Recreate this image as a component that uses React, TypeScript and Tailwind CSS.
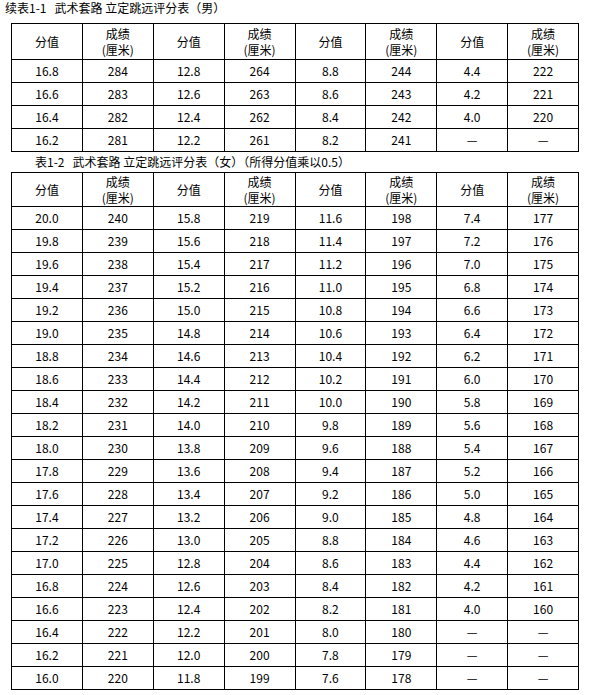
import React from 'react';

type Row = [string, string, string, string, string, string, string, string];

const maleRows: Row[] = [
  ['16.8', '284', '12.8', '264', '8.8', '244', '4.4', '222'],
  ['16.6', '283', '12.6', '263', '8.6', '243', '4.2', '221'],
  ['16.4', '282', '12.4', '262', '8.4', '242', '4.0', '220'],
  ['16.2', '281', '12.2', '261', '8.2', '241', '—', '—'],
];

// 女子表：四组分值/成绩并排，每组按 0.2 分递减
function buildFemaleRows(): Row[] {
  const rows: Row[] = [];
  for (let i = 0; i < 21; i++) {
    const a = (20 - i * 0.2).toFixed(1);
    const b = String(240 - i);
    const c = (15.8 - i * 0.2).toFixed(1);
    const d = String(219 - i);
    const e = (11.6 - i * 0.2).toFixed(1);
    const f = String(198 - i);
    const hasLast = i < 18;
    const g = hasLast ? (7.4 - i * 0.2).toFixed(1) : '—';
    const h = hasLast ? String(177 - i) : '—';
    rows.push([a, b, c, d, e, f, g, h]);
  }
  return rows;
}

const femaleRows = buildFemaleRows();

const font = { fontFamily: '"SimSun", "Noto Sans CJK SC", sans-serif' };

function HeaderRow({ height }: { height: string }) {
  const cells = [0, 1, 2, 3];
  return (
    <tr className={height}>
      {cells.map((i) => (
        <React.Fragment key={i}>
          <td className="border border-black text-center align-middle text-[12px]">分值</td>
          <td className="border border-black text-center align-middle text-[12px] leading-[16px]">
            成绩
            <br />
            (厘米)
          </td>
        </React.Fragment>
      ))}
    </tr>
  );
}

function ScoreTable({ rows, headerHeight }: { rows: Row[]; headerHeight: string }) {
  return (
    <table className="ml-[11px] w-[568px] table-fixed border-collapse border border-black">
      <tbody>
        <HeaderRow height={headerHeight} />
        {rows.map((row, r) => (
          <tr key={r} className="h-[23px]">
            {row.map((v, c) => (
              <td key={c} className="border border-black p-0 text-center align-middle text-[12px] leading-[14px]">
                {v}
              </td>
            ))}
          </tr>
        ))}
      </tbody>
    </table>
  );
}

export default function App() {
  return (
    <div className="h-[695px] w-[593px] overflow-hidden bg-white text-black" style={font}>
      <div className="h-[23px] pl-[5px] pt-px text-[12px] leading-[14px]">
        续表1-1&nbsp;&nbsp;&nbsp;武术套路 立定跳远评分表（男）
      </div>
      <ScoreTable rows={maleRows} headerHeight="h-[36px]" />
      <div className="flex h-[20px] items-center pl-[35px] text-[12px] leading-[14px]">
        表1-2&nbsp;&nbsp;&nbsp;武术套路 立定跳远评分表（女）（所得分值乘以0.5）
      </div>
      <ScoreTable rows={femaleRows} headerHeight="h-[34px]" />
      <div className="pl-[55px] pt-[5px] text-[12px] leading-[13px]">
        注：以上评分标准以厘米为单位计算。
      </div>
    </div>
  );
}
